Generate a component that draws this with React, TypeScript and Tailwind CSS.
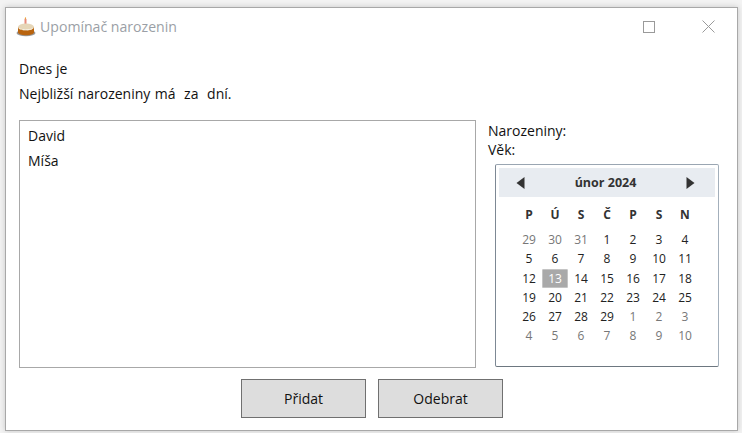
import { useMemo } from 'react'

const FONT = "font-['Open_Sans','Noto_Sans',sans-serif]"

const DAY_NAMES = ['P', 'Ú', 'S', 'Č', 'P', 'S', 'N']

type Day = { label: number; muted?: boolean; selected?: boolean }

function buildDays(): Day[] {
  const days: Day[] = []
  for (const d of [29, 30, 31]) days.push({ label: d, muted: true })
  for (let d = 1; d <= 29; d++) days.push({ label: d, selected: d === 13 })
  for (let d = 1; d <= 10; d++) days.push({ label: d, muted: true })
  return days
}

function CakeIcon() {
  return (
    <svg width="20" height="20" viewBox="0 0 20 20" className="shrink-0">
      <rect x="8.500" y="2" width="2" height="6" fill="#e88a7a" />
      <path d="M9.500 0c1 1 .8 2-.2 2.400-.8-.6-.7-1.500.2-2.400z" fill="#e9a23b" />
      <ellipse cx="10" cy="16" rx="9.500" ry="3.200" fill="#9a9a9a" />
      <path d="M2 10h16v5.500c0 1.600-3.600 2.800-8 2.800s-8-1.200-8-2.800z" fill="#b9640f" />
      <ellipse cx="10" cy="10" rx="8" ry="3.500" fill="#e6d6b8" />
      <path d="M2 10c1 2 2 3 3 2s2 2 3.500 1 2.500 1 4 0 2 .5 3-.5 2-1 2.500-2.500c-1 3-15 3-16 0z" fill="#f7f1e4" />
    </svg>
  )
}

function Calendar() {
  const days = useMemo(buildDays, [])
  return (
    <div className="ml-[7px] mt-[5px] h-[203px] w-[224px] rounded-[2px] border border-[#9aa6b2] border-b-[#6d7780] border-l-[#7d8894] border-r-[#a3afbb] bg-white p-[3px]">
      <div className="flex h-[29px] items-center justify-between bg-[#e8ecf1] pl-[17px] pr-[20px]">
        <svg width="9" height="12" viewBox="0 0 9 12">
          <path d="M8.500 0v12L0.500 6z" fill="#333" />
        </svg>
        <span className="pt-px text-[12.500px] leading-none font-bold text-[#333]">únor 2024</span>
        <svg width="9" height="12" viewBox="0 0 9 12">
          <path d="M0.500 0v12l8-6z" fill="#333" />
        </svg>
      </div>
      <div className="mt-[8px] ml-[17px] grid w-[182px] grid-cols-[repeat(7,26px)] text-center text-[12px]">
        {DAY_NAMES.map((d, i) => (
          <div key={i} className="h-[19px] font-bold leading-[19px] text-[#333]">
            {d}
          </div>
        ))}
      </div>
      <div className="mt-[6px] ml-[17px] grid w-[182px] grid-cols-[repeat(7,26px)] grid-rows-[repeat(6,19.300px)] text-center text-[12px]">
        {days.map((d, i) => (
          <div
            key={i}
            className={
              d.selected
                ? 'rounded-[1px] border border-[#c4c4c4] bg-[#a9a9a9] leading-[17px] text-white'
                : d.muted
                  ? 'leading-[19px] text-[#777]'
                  : 'leading-[19px] text-[#222]'
            }
          >
            {d.label}
          </div>
        ))}
      </div>
    </div>
  )
}

function WinButton({ label }: { label: string }) {
  return (
    <button className="h-[39px] w-[125px] border border-[#707070] bg-[#dddddd] text-[14px] text-[#111]">
      {label}
    </button>
  )
}

export default function App() {
  return (
    <div className={`h-[433px] w-[742px] overflow-hidden bg-[#f3f3f3] pl-[5px] pt-[7px] ${FONT}`}>
      <div className="flex h-[424px] w-[733px] flex-col border border-[#a8a8a8] bg-white shadow-[0_0_6px_rgba(0,0,0,0.18)]">
        {/* Title bar */}
        <div className="flex h-[37px] shrink-0 items-center">
          <div className="ml-[10px]">
            <CakeIcon />
          </div>
          <span className="ml-[4px] text-[14.100px] text-[#9b9fa6]">Upomínač narozenin</span>
          <div className="ml-auto flex items-center">
            <svg width="12" height="12" viewBox="0 0 12 12" className="mr-[47px]">
              <rect x="0.500" y="0.500" width="11" height="11" fill="none" stroke="#9a9a9a" />
            </svg>
            <svg width="13" height="13" viewBox="0 0 13 13" className="mr-[22px]">
              <path d="M0.500 0.500l12 12M12.500 0.500l-12 12" stroke="#9a9a9a" />
            </svg>
          </div>
        </div>

        {/* Summary lines */}
        <div className="ml-[13px] mt-[11px] text-[14px] leading-[25px] text-[#111]">
          <div>Dnes je</div>
          <div className="whitespace-pre [word-spacing:0.7px]">Nejbližší narozeniny má  za  dní.</div>
        </div>

        {/* List and calendar */}
        <div className="mt-[14px] flex">
          <div className="ml-[13px] h-[248px] w-[457px] border border-[#a8a8a8] pl-[8px] pt-[2px] text-[14px] leading-[25px] text-[#111]">
            <div>David</div>
            <div>Míša</div>
          </div>
          <div className="ml-[12px] text-[14px] leading-[19px] text-[#111]">
            <div className="pt-px">Narozeniny:</div>
            <div>Věk:</div>
            <Calendar />
          </div>
        </div>

        {/* Buttons */}
        <div className="mt-[11px] ml-[235px] flex gap-[12px]">
          <WinButton label="Přidat" />
          <WinButton label="Odebrat" />
        </div>
      </div>
    </div>
  )
}
